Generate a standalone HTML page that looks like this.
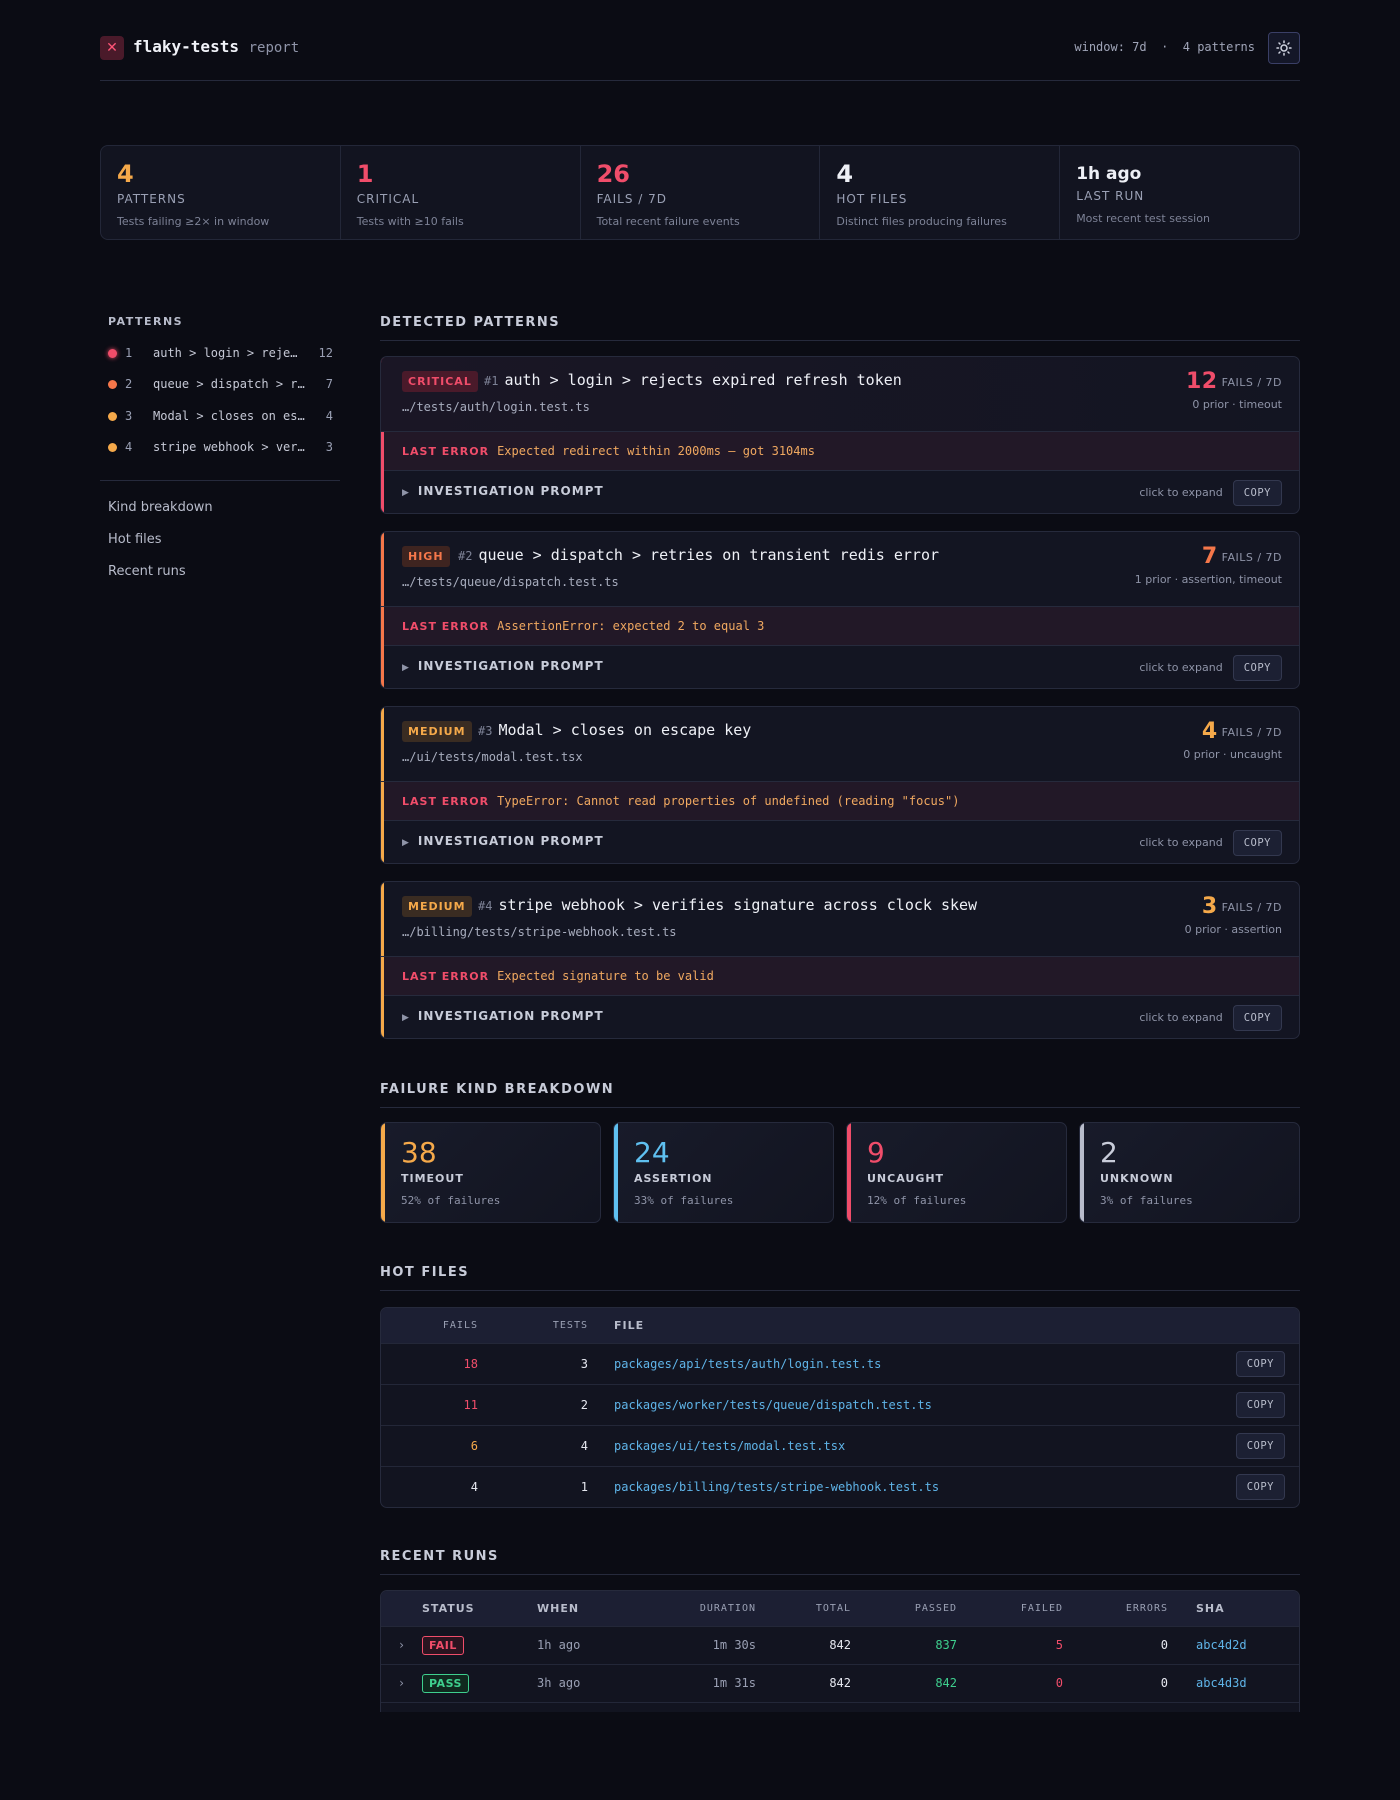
<!DOCTYPE html>
<html><head><meta charset="utf-8"><style>
*{box-sizing:border-box;margin:0;padding:0}
body{width:1400px;height:1800px;background:#0b0c14;color:#e6e8f0;font-family:"DejaVu Sans","Liberation Sans",sans-serif;position:relative;overflow:hidden}
.mono{font-family:"DejaVu Sans Mono","Liberation Mono",monospace}
.abs{position:absolute}
.hdrline{position:absolute;left:100px;top:80px;width:1200px;height:1px;background:#262a3c}
.logo{left:100px;top:36px;width:24px;height:24px;background:#4a1a2a;border-radius:4px;color:#ff5577;font-size:14px;text-align:center;line-height:24px}
.stats{left:100px;top:145px;width:1200px;height:95px;border:1px solid #232738;border-radius:8px;background:#121420;display:flex}
.stat{flex:1;border-right:1px solid #232738;padding:14px 16px}
.stat:last-child{border-right:none}
.stat .n{font-size:24px;font-weight:bold;font-family:"DejaVu Sans","Liberation Sans",sans-serif;line-height:28px}
.stat .l{font-size:12px;letter-spacing:1px;color:#9aa0b4;margin-top:4px}
.stat .d{font-size:11px;color:#7d8296;margin-top:9px}
.sh{font-size:12px;font-weight:bold;letter-spacing:1.5px;color:#b8bccb}
.side-item{position:absolute;left:108px;font-size:12px;color:#c6c9d6;display:flex;align-items:center;width:225px}
.dot{width:9px;height:9px;border-radius:50%;margin-right:8px}
.sidelink{position:absolute;left:108px;font-size:13px;color:#b8bccb}
.sec{position:absolute;left:380px;width:920px}
.sec h2{font-size:13px;font-weight:bold;letter-spacing:1.5px;color:#c8ccd9;padding-bottom:10px;border-bottom:1px solid #262a3c}
.card{position:absolute;left:380px;width:920px;height:158px;border:1px solid #262a3c;border-radius:7px;background:#131522;overflow:hidden}
.card .bar{position:absolute;left:0;top:0;bottom:0;width:3px}
.card .top{height:75px;position:relative;border-bottom:1px solid #262a3c}
.badge{position:absolute;left:21px;top:14px;font-size:11px;font-weight:bold;letter-spacing:1px;padding:4px 6px;border-radius:3px}
.title{position:absolute;top:14px;font-size:15px;color:#eef0f6}
.title small{font-size:12px;color:#7d8296;margin-right:6px}
.path{position:absolute;left:21px;top:43px;font-size:12px;color:#a8adbe}
.cnt{position:absolute;right:17px;top:12px;font-size:11px;color:#8f94a8;text-align:right;letter-spacing:.5px}
.cnt b{font-size:22px;font-family:"DejaVu Sans",sans-serif;margin-right:4px;vertical-align:-2px}
.meta{position:absolute;right:17px;top:41px;font-size:11px;color:#8f94a8}
.err{height:39px;background:#221827;border-bottom:1px solid #262a3c;padding:12px 21px;font-size:12px;color:#f0a860}
.err b{font-size:11px;color:#f04d6a;letter-spacing:1px;margin-right:8px;font-family:"DejaVu Sans",sans-serif}
.prm{height:43px;position:relative;padding:13px 21px;font-size:12px;font-weight:bold;letter-spacing:1px;color:#c8ccd9}
.prm .x{position:absolute;right:17px;top:9px;font-size:11px;color:#8f94a8;font-weight:normal;letter-spacing:0}
.copy{display:inline-block;border:1px solid #33384f;background:#1c2033;border-radius:4px;font-size:10.5px;color:#b8bccb;padding:6px 10px;margin-left:10px;font-family:"DejaVu Sans Mono",monospace;letter-spacing:.5px}
.kind{position:absolute;top:1122px;width:221px;height:101px;border:1px solid #262a3c;border-radius:7px;background:linear-gradient(135deg,#181b2a,#121420);overflow:hidden;padding:14px 20px}
.kind .bar{position:absolute;left:0;top:0;bottom:0;width:4px}
.kind .n{font-size:28px;line-height:32px}
.kind .l{font-size:11px;font-weight:bold;letter-spacing:1px;color:#c8ccd9;margin-top:3px}
.kind .d{font-size:11px;color:#8f94a8;margin-top:9px}
table{border-collapse:collapse;width:100%}
.tbl{position:absolute;left:380px;width:920px;border:1px solid #262a3c;border-radius:7px;overflow:hidden;background:#121420}
th{background:#1c1f33;height:35px;font-size:10px;font-weight:normal;color:#9aa0b4;letter-spacing:1px;font-family:"DejaVu Sans Mono",monospace}
th.s{font-family:"DejaVu Sans",sans-serif;font-weight:bold;font-size:11px;color:#b8bccb}
td{font-size:12px;border-top:1px solid #232738;font-family:"DejaVu Sans Mono",monospace}
.r{text-align:right}.l{text-align:left}
.blue{color:#5fb4e8}
.pill{display:inline-block;font-size:11px;font-weight:bold;padding:2px 6px;border-radius:3px;font-family:"DejaVu Sans",sans-serif;letter-spacing:.5px}
</style></head><body>

<div class="abs logo">✕</div>
<div class="abs mono" style="left:133px;top:37px;font-size:16px;font-weight:bold;color:#f0f2f8">flaky-tests <span style="font-weight:normal;font-size:14px;color:#8f94a8">report</span></div>
<div class="abs mono" style="right:145px;top:40px;font-size:12px;color:#a0a5b8">window: 7d &nbsp;·&nbsp; 4 patterns</div>
<div class="abs" style="left:1268px;top:32px;width:32px;height:32px;border:1px solid #3a3f66;border-radius:4px;background:#141728">
<svg width="30" height="30" viewBox="0 0 30 30"><circle cx="15" cy="15" r="3" fill="none" stroke="#d0d4e0" stroke-width="1.5"/><g stroke="#d0d4e0" stroke-width="1.5" stroke-linecap="round"><path d="M15 8v1.5M15 20.5V22M8 15h1.5M20.5 15H22M10 10l1 1M19 19l1 1M10 20l1-1M19 11l1-1"/></g></svg></div>
<div class="hdrline"></div>

<div class="abs stats">
<div class="stat"><div class="n" style="color:#f5a94a">4</div><div class="l">PATTERNS</div><div class="d">Tests failing ≥2× in window</div></div>
<div class="stat"><div class="n" style="color:#f04d6a">1</div><div class="l">CRITICAL</div><div class="d">Tests with ≥10 fails</div></div>
<div class="stat"><div class="n" style="color:#f04d6a">26</div><div class="l">FAILS / 7D</div><div class="d">Total recent failure events</div></div>
<div class="stat"><div class="n" style="color:#eef0f6">4</div><div class="l">HOT FILES</div><div class="d">Distinct files producing failures</div></div>
<div class="stat"><div class="n mono" style="color:#eef0f6;font-size:17px">1h ago</div><div class="l" style="margin-top:1px">LAST RUN</div><div class="d">Most recent test session</div></div>
</div>

<div class="abs sh" style="left:108px;top:315px;font-size:11px">PATTERNS</div>
<div class="side-item mono" style="top:346px"><span class="dot" style="background:#f04d6a;box-shadow:0 0 5px #f04d6a"></span><span style="width:28px;color:#9aa0b4">1</span><span style="flex:1">auth &gt; login &gt; reje…</span><span style="color:#9aa0b4">12</span></div>
<div class="side-item mono" style="top:377px"><span class="dot" style="background:#f5774a"></span><span style="width:28px;color:#9aa0b4">2</span><span style="flex:1">queue &gt; dispatch &gt; r…</span><span style="color:#9aa0b4">7</span></div>
<div class="side-item mono" style="top:409px"><span class="dot" style="background:#f5a94a"></span><span style="width:28px;color:#9aa0b4">3</span><span style="flex:1">Modal &gt; closes on es…</span><span style="color:#9aa0b4">4</span></div>
<div class="side-item mono" style="top:440px"><span class="dot" style="background:#f5a94a"></span><span style="width:28px;color:#9aa0b4">4</span><span style="flex:1">stripe webhook &gt; ver…</span><span style="color:#9aa0b4">3</span></div>
<div class="abs" style="left:100px;top:480px;width:240px;height:1px;background:#262a3c"></div>
<div class="sidelink" style="top:500px">Kind breakdown</div>
<div class="sidelink" style="top:532px">Hot files</div>
<div class="sidelink" style="top:564px">Recent runs</div>

<div class="sec" style="top:315px"><h2>DETECTED PATTERNS</h2></div>

<div class="card" style="top:356px"><div class="bar" style="background:#f04d6a"></div>
<div class="top" style="background:linear-gradient(90deg,#1a1625,#131522)"><span class="badge" style="background:#4a1a2a;color:#f04d6a">CRITICAL</span><div class="title mono" style="left:103px"><small>#1</small>auth &gt; login &gt; rejects expired refresh token</div><div class="path mono">…/tests/auth/login.test.ts</div><div class="cnt"><b style="color:#f04d6a">12</b>FAILS / 7D</div><div class="meta">0 prior · timeout</div></div>
<div class="err mono"><b>LAST ERROR</b>Expected redirect within 2000ms — got 3104ms</div>
<div class="prm"><span style="font-size:9px;color:#8f94a8;margin-right:8px">▶</span>INVESTIGATION PROMPT<div class="x">click to expand<span class="copy">COPY</span></div></div></div>

<div class="card" style="top:531px"><div class="bar" style="background:#f5774a"></div>
<div class="top"><span class="badge" style="background:#3e2420;color:#f5774a">HIGH</span><div class="title mono" style="left:77px"><small>#2</small>queue &gt; dispatch &gt; retries on transient redis error</div><div class="path mono">…/tests/queue/dispatch.test.ts</div><div class="cnt"><b style="color:#f5774a">7</b>FAILS / 7D</div><div class="meta">1 prior · assertion, timeout</div></div>
<div class="err mono"><b>LAST ERROR</b>AssertionError: expected 2 to equal 3</div>
<div class="prm"><span style="font-size:9px;color:#8f94a8;margin-right:8px">▶</span>INVESTIGATION PROMPT<div class="x">click to expand<span class="copy">COPY</span></div></div></div>

<div class="card" style="top:706px"><div class="bar" style="background:#f5a94a"></div>
<div class="top"><span class="badge" style="background:#3a2c22;color:#f5a94a">MEDIUM</span><div class="title mono" style="left:97px"><small>#3</small>Modal &gt; closes on escape key</div><div class="path mono">…/ui/tests/modal.test.tsx</div><div class="cnt"><b style="color:#f5a94a">4</b>FAILS / 7D</div><div class="meta">0 prior · uncaught</div></div>
<div class="err mono"><b>LAST ERROR</b>TypeError: Cannot read properties of undefined (reading "focus")</div>
<div class="prm"><span style="font-size:9px;color:#8f94a8;margin-right:8px">▶</span>INVESTIGATION PROMPT<div class="x">click to expand<span class="copy">COPY</span></div></div></div>

<div class="card" style="top:881px"><div class="bar" style="background:#f5a94a"></div>
<div class="top"><span class="badge" style="background:#3a2c22;color:#f5a94a">MEDIUM</span><div class="title mono" style="left:97px"><small>#4</small>stripe webhook &gt; verifies signature across clock skew</div><div class="path mono">…/billing/tests/stripe-webhook.test.ts</div><div class="cnt"><b style="color:#f5a94a">3</b>FAILS / 7D</div><div class="meta">0 prior · assertion</div></div>
<div class="err mono"><b>LAST ERROR</b>Expected signature to be valid</div>
<div class="prm"><span style="font-size:9px;color:#8f94a8;margin-right:8px">▶</span>INVESTIGATION PROMPT<div class="x">click to expand<span class="copy">COPY</span></div></div></div>

<div class="sec" style="top:1082px"><h2>FAILURE KIND BREAKDOWN</h2></div>
<div class="kind" style="left:380px"><div class="bar" style="background:#f5a94a"></div><div class="n" style="color:#f5a94a">38</div><div class="l">TIMEOUT</div><div class="d mono">52% of failures</div></div>
<div class="kind" style="left:613px"><div class="bar" style="background:#5fc0f0"></div><div class="n" style="color:#5fc0f0">24</div><div class="l">ASSERTION</div><div class="d mono">33% of failures</div></div>
<div class="kind" style="left:846px"><div class="bar" style="background:#f04d6a"></div><div class="n" style="color:#f04d6a">9</div><div class="l">UNCAUGHT</div><div class="d mono">12% of failures</div></div>
<div class="kind" style="left:1079px"><div class="bar" style="background:#b8bccb"></div><div class="n" style="color:#c8ccd9">2</div><div class="l">UNKNOWN</div><div class="d mono">3% of failures</div></div>

<div class="sec" style="top:1265px"><h2>HOT FILES</h2></div>
<div class="tbl" style="top:1307px"><table>
<tr><th class="r" style="width:97px">FAILS</th><th class="r" style="width:110px">TESTS</th><th class="s l" style="padding-left:26px">FILE</th><th></th></tr>
<tr style="height:41px"><td class="r" style="color:#f04d6a">18</td><td class="r">3</td><td class="blue" style="padding-left:26px">packages/api/tests/auth/login.test.ts</td><td class="r" style="padding-right:14px"><span class="copy">COPY</span></td></tr>
<tr style="height:41px"><td class="r" style="color:#f04d6a">11</td><td class="r">2</td><td class="blue" style="padding-left:26px">packages/worker/tests/queue/dispatch.test.ts</td><td class="r" style="padding-right:14px"><span class="copy">COPY</span></td></tr>
<tr style="height:41px"><td class="r" style="color:#f5a94a">6</td><td class="r">4</td><td class="blue" style="padding-left:26px">packages/ui/tests/modal.test.tsx</td><td class="r" style="padding-right:14px"><span class="copy">COPY</span></td></tr>
<tr style="height:41px"><td class="r">4</td><td class="r">1</td><td class="blue" style="padding-left:26px">packages/billing/tests/stripe-webhook.test.ts</td><td class="r" style="padding-right:14px"><span class="copy">COPY</span></td></tr>
</table></div>

<div class="sec" style="top:1549px"><h2>RECENT RUNS</h2></div>
<div class="tbl" style="top:1590px;height:122px;border-bottom:none;border-radius:7px 7px 0 0"><table>
<tr><th style="width:41px"></th><th class="s l" style="width:115px">STATUS</th><th class="s l" style="width:118px">WHEN</th><th class="r" style="width:101px">DURATION</th><th class="r" style="width:95px">TOTAL</th><th class="r" style="width:106px">PASSED</th><th class="r" style="width:106px">FAILED</th><th class="r" style="width:105px">ERRORS</th><th class="s l" style="padding-left:28px">SHA</th></tr>
<tr style="height:38px"><td style="text-align:center;color:#8f94a8">›</td><td><span class="pill" style="border:1px solid #f04d6a;color:#f04d6a;background:#2a1420">FAIL</span></td><td style="color:#9aa0b4">1h ago</td><td class="r" style="color:#9aa0b4">1m 30s</td><td class="r">842</td><td class="r" style="color:#3ecf8e">837</td><td class="r" style="color:#f04d6a">5</td><td class="r">0</td><td class="blue" style="padding-left:28px">abc4d2d</td></tr>
<tr style="height:38px"><td style="text-align:center;color:#8f94a8">›</td><td><span class="pill" style="border:1px solid #3ecf8e;color:#3ecf8e;background:#10291f">PASS</span></td><td style="color:#9aa0b4">3h ago</td><td class="r" style="color:#9aa0b4">1m 31s</td><td class="r">842</td><td class="r" style="color:#3ecf8e">842</td><td class="r" style="color:#f04d6a">0</td><td class="r">0</td><td class="blue" style="padding-left:28px">abc4d3d</td></tr>
<tr style="height:38px"><td></td><td></td><td></td><td></td><td></td><td></td><td></td><td></td><td></td></tr>
</table></div>
</body></html>
